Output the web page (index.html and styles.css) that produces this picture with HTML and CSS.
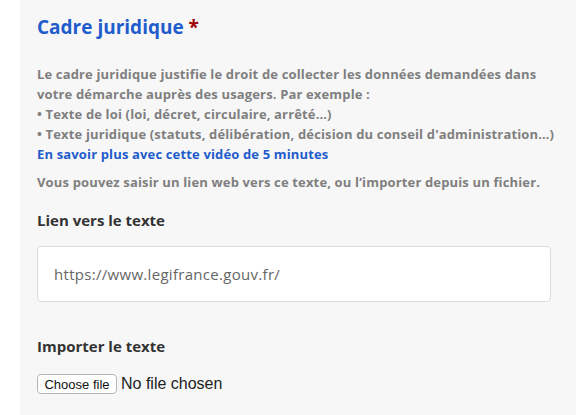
FILE: index.html
```html
<!DOCTYPE html>
<html lang="fr">
<head>
<meta charset="utf-8">
<title>Cadre juridique</title>
<link rel="stylesheet" href="styles.css">
</head>
<body>
<div class="page">
  <section class="panel">
    <h2 class="title">Cadre juridique <span class="req">*</span></h2>
    <div class="notice">
      <p>Le cadre juridique justifie le droit de collecter les données demandées dans votre démarche auprès des usagers. Par exemple :<br>
      • Texte de loi (loi, décret, circulaire, arrêté…)<br>
      • Texte juridique (statuts, délibération, décision du conseil d'administration…)<br>
      <a class="link" href="#">En savoir plus avec cette vidéo de 5 minutes</a></p>
      <p class="hint">Vous pouvez saisir un lien web vers ce texte, ou l’importer depuis un fichier.</p>
    </div>
    <label class="label" for="lien">Lien vers le texte</label>
    <input class="input" id="lien" type="text" value="https://www.legifrance.gouv.fr/">
    <label class="label label-import">Importer le texte</label>
    <div class="file">
      <button class="file-btn" type="button">Choose file</button>
      <span class="file-name">No file chosen</span>
    </div>
  </section>
</div>
</body>
</html>
```

FILE: styles.css
```css
* { box-sizing: border-box; }
html, body { margin: 0; padding: 0; background: #ffffff; }
body { font-family: "Open Sans", Lato, sans-serif; }
.page { padding-left: 20px; height: 415px; overflow: hidden; }
.panel { background: #f7f7f7; height: 100%; padding: 13px 10px 0 17px; }
.title { margin: 0; font-size: 19px; line-height: 28px; font-weight: 700; color: #1f5ccc; }
.req { color: #a10005; }
.notice { margin-top: 23px; font-size: 13px; font-weight: 700; color: #7f7f7f; line-height: 20px; letter-spacing: 0.15px; }
.notice p { margin: 0; }
.link { color: #1f5ccc; text-decoration: none; }
.hint { margin-top: 8px !important; }
.label { display: block; font-size: 15px; font-weight: 700; color: #333; margin-top: 18px; line-height: 20px; }
.input { display: block; width: 514px; height: 56px; margin-top: 16px; border: 1px solid #dcdcdc; border-radius: 4px; background: #fff; padding: 0 16px; font-family: inherit; font-size: 15px; letter-spacing: 0.3px; color: #666; outline: none; }
.label-import { margin-top: 34px; }
.file { display: flex; align-items: center; margin-top: 18px; }
.file-btn { font-family: "Liberation Sans", Arial, sans-serif; font-size: 13px; width: 80px; height: 20px; padding: 0; background: #fff; border: 1px solid #b5b5b5; border-radius: 4px; color: #111; }
.file-name { font-family: "Liberation Sans", Arial, sans-serif; font-size: 16px; color: #222; margin-left: 4px; }
```
